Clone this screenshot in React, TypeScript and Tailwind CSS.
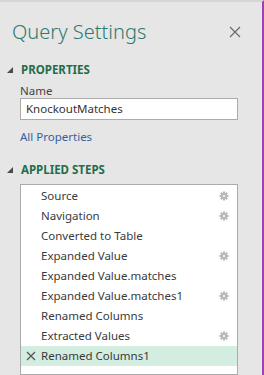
import React from "react";

const steps: { name: string; gear?: boolean; active?: boolean }[] = [
    { name: "Source", gear: true },
    { name: "Navigation", gear: true },
    { name: "Converted to Table" },
    { name: "Expanded Value", gear: true },
    { name: "Expanded Value.matches" },
    { name: "Expanded Value.matches1", gear: true },
    { name: "Renamed Columns" },
    { name: "Extracted Values", gear: true },
    { name: "Renamed Columns1", active: true },
];

function Caret() {
    return (
        <svg width="6" height="6" viewBox="0 0 6 6" className="shrink-0">
            <polygon points="6,0 6,6 0,6" fill="#4a4a4a" />
        </svg>
    );
}

function Gear() {
    return (
        <svg width="10" height="10" viewBox="0 0 10 10">
            <g fill="#b8b8b8">
                <rect x="4" y="0.5" width="2" height="9" />
                <rect x="0.5" y="4" width="9" height="2" />
                <rect x="4" y="0.5" width="2" height="9" transform="rotate(45 5 5)" />
                <rect x="4" y="0.5" width="2" height="9" transform="rotate(-45 5 5)" />
                <circle cx="5" cy="5" r="3" />
            </g>
            <circle cx="5" cy="5" r="1.1" fill="#ffffff" />
        </svg>
    );
}

export default function App() {
    return (
        <div
            className="flex h-[375px] w-[264px] flex-col overflow-hidden border-t-2 border-r-2 border-t-[#d6d6d6] border-r-[#a040b8] bg-[#e6e6e6] text-[11.5px] text-[#3a3a3a]"
            style={{ fontFamily: '"Noto Sans", "Open Sans", sans-serif' }}
        >
            <div className="flex h-[60px] items-center justify-between pr-[21px] pl-3">
                <div className="text-[20px] font-light text-[#2c7a6e]">Query Settings</div>
                <svg width="12" height="12" viewBox="0 0 12 12">
                    <path d="M1 1 L11 11 M11 1 L1 11" stroke="#6a6a6a" strokeWidth="1.2" />
                </svg>
            </div>

            <div className="flex h-[16px] items-center gap-[8px] pl-[7px]">
                <Caret />
                <div className="text-[11.5px] leading-[16px] font-bold text-[#1f6e4c]">PROPERTIES</div>
            </div>
            <div className="mt-[6px] h-[14px] pl-[20px] leading-[14px] text-[#444]">Name</div>
            <div className="mt-0 ml-[20px] flex h-[22px] w-[218px] items-center border border-[#ababab] bg-white pl-[5px] text-[#333]">
                KnockoutMatches
            </div>
            <div className="mt-[9px] h-[16px] pl-[20px] leading-[16px] text-[#34609f]">All Properties</div>

            <div className="mt-[17px] flex h-[16px] items-center gap-[8px] pl-[7px]">
                <Caret />
                <div className="text-[11.5px] leading-[16px] font-bold text-[#1f6e4c]">APPLIED STEPS</div>
            </div>
            <div className="mt-[6px] ml-[20px] w-[218px] flex-1 border border-[#ababab] bg-white pt-[1px]">
                {steps.map((s) => (
                    <div
                        key={s.name}
                        className={`flex h-[20px] items-center pr-[8px] ${s.active ? "bg-[#d3ede0]" : ""}`}
                    >
                        <div className="flex w-[20px] justify-center">
                            {s.active && (
                                <svg width="10" height="10" viewBox="0 0 10 10">
                                    <path d="M1 1 L9 9 M9 1 L1 9" stroke="#555" strokeWidth="1.3" />
                                </svg>
                            )}
                        </div>
                        <div className="flex-1 leading-[20px] text-[#3a3a3a]">{s.name}</div>
                        {s.gear && <Gear />}
                    </div>
                ))}
            </div>
        </div>
    );
}
